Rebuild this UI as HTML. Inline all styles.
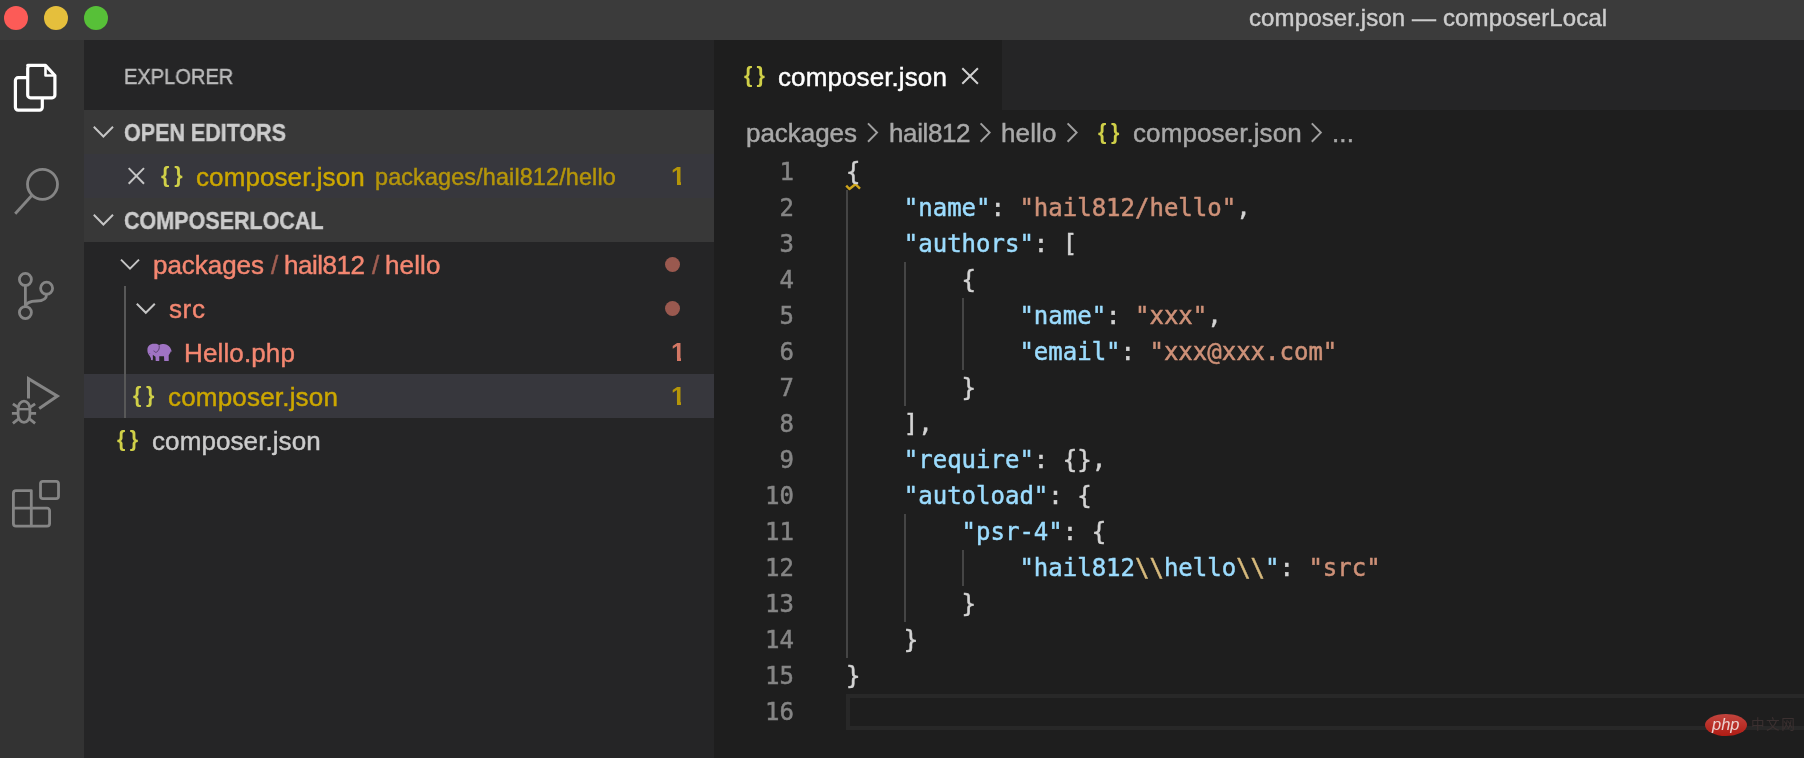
<!DOCTYPE html>
<html lang="en">
<head>
<meta charset="utf-8">
<title>composer.json — composerLocal</title>
<style>
*{box-sizing:border-box;margin:0;padding:0}
html,body{width:1804px;height:758px;overflow:hidden;background:#1e1e1e}
body{position:relative;font-family:"Liberation Sans",sans-serif;color:#cccccc;-webkit-font-smoothing:antialiased}
.abs{position:absolute}
.t{position:absolute;white-space:nowrap;line-height:44px;height:44px}

/* title bar */
#titlebar{left:0;top:0;width:1804px;height:40px;background:#3b3b3b}
.light{position:absolute;top:6px;width:24px;height:24px;border-radius:50%}
#title{left:1250px;top:-3px;font-size:24px;color:#cccccc;line-height:42px;height:42px}

/* activity bar */
#activity{left:0;top:40px;width:84px;height:718px;background:#333333}
#activity svg{position:absolute}

/* sidebar */
#sidebar{left:84px;top:40px;width:630px;height:718px;background:#252526}
.hdr{position:absolute;left:0;width:630px;height:44px;background:#383838}
.hdr .lbl{position:absolute;left:40px;top:1px;line-height:44px;font-size:24px;font-weight:bold;color:#cccccc;white-space:nowrap}
.row{position:absolute;left:0;width:630px;height:44px}
.row.sel{background:#37373d}
.row .lbl{position:absolute;top:0;line-height:44px;font-size:26px;white-space:nowrap}
.row .badge{position:absolute;left:587px;top:0;line-height:44px;font-size:25.5px;font-weight:bold;opacity:.85;clip-path:polygon(0 0,10px 0,10px 44px,6px 44px,6px 27.8px,0 27.8px)}
.row .dot{position:absolute;left:581px;top:15px;width:15px;height:15px;border-radius:50%;background:#9a594f}
.err{color:#f48771}
.warn{color:#cca700}
.json{color:#d0d048 !important;font-weight:bold;font-size:21.5px !important;-webkit-text-stroke:0 !important;margin-top:-1px !important}
.chev{position:absolute}

/* editor */
#tabs{left:714px;top:40px;width:1090px;height:70px;background:#252526}
#tab{left:0;top:0;width:288px;height:70px;background:#1e1e1e}
#crumbs{left:714px;top:110px;width:1090px;height:44px;background:#1e1e1e}
#crumbs .t{font-size:26px;color:#a9a9a9;top:1px}
#code{left:714px;top:154px;width:1090px;height:604px;background:#1e1e1e;font-family:"DejaVu Sans Mono","Liberation Mono",monospace;font-size:24px}
.ln{position:absolute;left:0;width:80px;text-align:right;height:36px;line-height:36px;color:#858585;white-space:pre}
.cl{position:absolute;left:132px;height:36px;line-height:36px;color:#d4d4d4;white-space:pre}
.k{color:#9cdcfe}.s{color:#ce9178}.e{color:#d7ba7d}
.guide{position:absolute;width:2px;background:#454545}
.t,.lbl,.ln,.cl,.badge{will-change:transform}
.t,.lbl{-webkit-text-stroke:0.45px}
.cl,.ln{-webkit-text-stroke:0.5px}
.row .lbl{margin-top:1px}
</style>
</head>
<body>

<!-- TITLE BAR -->
<div id="titlebar" class="abs">
  <div class="light" style="left:4px;background:#fc5b57"></div>
  <div class="light" style="left:44px;background:#e5bf3c"></div>
  <div class="light" style="left:84px;background:#57c038"></div>
  <div id="title" class="t" style="left:1249.1px;letter-spacing:0.12px">composer.json — composerLocal</div>
</div>

<!-- ACTIVITY BAR -->
<div id="activity" class="abs">
  <!-- files (active) : coordinates are page coords, svg offset by top:40 -->
  <svg width="84" height="718" viewBox="0 40 84 718" style="left:0;top:0" fill="none" stroke-linejoin="round" stroke-linecap="butt">
    <g stroke="#ffffff" stroke-width="3.2">
      <path d="M27.7 65.4 H45.5 L54.9 75.5 V95 a2.8 2.8 0 0 1 -2.8 2.8 H30.5 a2.8 2.8 0 0 1 -2.8 -2.8 V68.2 a2.8 2.8 0 0 1 2.8 -2.8 Z"/>
      <path d="M45.5 65.4 V75.5 H54.9" stroke-width="2.6"/>
      <path d="M27.7 77.7 H18.2 a2.8 2.8 0 0 0 -2.8 2.8 V107.3 a2.8 2.8 0 0 0 2.8 2.8 H39.5 a2.8 2.8 0 0 0 2.8 -2.8 V97.8"/>
    </g>
    <g stroke="#858585" stroke-width="2.8">
      <!-- search -->
      <circle cx="42.5" cy="184.3" r="15"/>
      <path d="M32 195.2 L15.2 213.8"/>
      <!-- scm -->
      <circle cx="25.4" cy="279.4" r="6"/>
      <circle cx="46.6" cy="288.2" r="6"/>
      <circle cx="25.4" cy="312.6" r="6"/>
      <path d="M25.4 285.4 V306.6"/>
      <path d="M46.6 294.2 C46.6 300.5 41 301 36.5 301 C30.5 301 26.2 303 25.4 306.6"/>
      <!-- debug -->
      <path d="M28.5 398.6 V378.6 L57.4 396.1 L39.2 408.6" stroke-linejoin="miter" stroke-width="3"/>
      <rect x="18.1" y="401.1" width="11.8" height="21.3" rx="5.9" ry="7.6"/>
      <path d="M18.4 409.2 H29.6" stroke-width="2.4"/>
      <path d="M18.4 407.6 L12.9 403.8 M29.6 407.6 L35.1 403.8 M18.1 413.4 H11.9 M29.9 413.4 H36.1 M18.5 418.8 L12.9 423.3 M29.5 418.8 L35.1 423.3"/>
      <!-- extensions -->
      <rect x="40.5" y="481.4" width="18" height="17.2" rx="2.4"/>
      <path d="M31.3 490.6 H16 a2.6 2.6 0 0 0 -2.6 2.6 V523.6 a2.6 2.6 0 0 0 2.6 2.6 H47 a2.6 2.6 0 0 0 2.6 -2.6 V510.8 a2.6 2.6 0 0 0 -2.6 -2.6 H31.3 Z"/>
      <path d="M31.3 508.2 V526.2 M13.4 508.2 H31.3"/>
    </g>
  </svg>
</div>

<!-- SIDEBAR (coordinates relative to sidebar origin 84,40) -->
<div id="sidebar" class="abs">
  <div id="t_explorer" class="t" style="left:39.9px;top:15px;font-size:21.8px;color:#bbbbbb;transform-origin:0 50%;transform:scaleX(0.9201)">EXPLORER</div>

  <div class="hdr" style="top:70px"><span id="t_open" class="lbl" style="left:40.2px;transform-origin:0 50%;transform:scaleX(0.8951)">OPEN EDITORS</span></div>
  <div class="row sel" style="top:114px">
    <span id="j1" class="lbl json" style="left:76.8px;letter-spacing:0.23px">{&#8201;}</span>
    <span id="t_oe_name" class="lbl warn" style="left:111.8px;letter-spacing:0.09px">composer.json</span>
    <span id="t_oe_desc" class="lbl warn" style="left:291.3px;font-size:23.4px;opacity:.85;letter-spacing:0.13px">packages/hail812/hello</span>
    <span id="b1" class="badge warn">1</span>
  </div>
  <div class="hdr" style="top:158px"><span id="t_local" class="lbl" style="left:40.2px;transform-origin:0 50%;transform:scaleX(0.8963)">COMPOSERLOCAL</span></div>

  <div class="row" style="top:202px">
    <span id="t_p1" class="lbl err" style="left:69.1px;letter-spacing:-0.05px">packages</span>
    <span id="t_s1" class="lbl err" style="left:187.3px;opacity:.6">/</span>
    <span id="t_p2" class="lbl err" style="left:199.6px;letter-spacing:-0.48px">hail812</span>
    <span id="t_s2" class="lbl err" style="left:287.5px;opacity:.6">/</span>
    <span id="t_p3" class="lbl err" style="left:301px;letter-spacing:0.11px">hello</span>
    <span class="dot"></span>
  </div>
  <div class="row" style="top:246px">
    <span id="t_src" class="lbl err" style="left:84.7px;letter-spacing:0.62px">src</span>
    <span class="dot"></span>
  </div>
  <div class="row" style="top:290px">
    <span id="t_php" class="lbl err" style="left:99.5px;letter-spacing:0.13px">Hello.php</span>
    <span id="b2" class="badge err">1</span>
  </div>
  <div class="row sel" style="top:334px">
    <span id="j2" class="lbl json" style="left:48.6px;letter-spacing:0.12px">{&#8201;}</span>
    <span id="t_cj1" class="lbl warn" style="left:83.6px;letter-spacing:0.19px">composer.json</span>
    <span id="b3" class="badge warn">1</span>
  </div>
  <div class="row" style="top:378px">
    <span id="j3" class="lbl json" style="left:33.4px;letter-spacing:0.08px">{&#8201;}</span>
    <span id="t_cj2" class="lbl" style="left:67.7px;color:#cccccc;letter-spacing:0.09px">composer.json</span>
  </div>
  <div class="abs" style="left:40px;top:246px;width:2px;height:132px;background:#585858"></div>

  <!-- sidebar icons: chevrons, close, php elephant (page coords via viewBox) -->
  <svg class="abs" style="left:0;top:0" width="630" height="718" viewBox="84 40 630 718" fill="none">
    <g stroke="#c5c5c5" stroke-width="2" stroke-linejoin="miter">
      <path d="M93.8 126.8 L103.4 136.5 L113 126.8"/>
      <path d="M93.8 214.8 L103.4 224.5 L113 214.8"/>
      <path d="M121 259.6 L130 268.6 L139 259.6"/>
      <path d="M136.8 303.8 L145.8 312.8 L154.8 303.8"/>
      <path d="M128.7 168.1 L144 183.7 M144 168.1 L128.7 183.7"/>
    </g>
    <g transform="translate(147.2 343.5) scale(0.04731)">
      <path fill="#a074c4" d="M5 140 C0 60 55 5 145 5 C195 0 235 15 255 35 C295 10 365 5 415 25 C475 50 505 110 520 175 L500 165 C490 200 465 230 455 250 L455 370 L360 370 L355 270 L255 270 L255 370 L180 370 L175 280 C155 270 135 255 120 240 C115 280 130 320 115 355 L80 350 C90 300 55 270 30 230 C10 200 3 170 5 140 Z"/>
      <path stroke="#3a2a48" stroke-width="14" d="M250 40 C265 90 250 150 200 180 C170 195 150 175 140 150"/>
      <circle cx="55" cy="210" r="9" fill="#3a2a48"/>
    </g>
  </svg>
</div>

<!-- TABS -->
<div id="tabs" class="abs">
  <div id="tab" class="abs">
    <span id="j4" class="t json" style="left:29.6px;top:14px;letter-spacing:-0.07px">{&#8201;}</span>
    <span id="t_tab" class="t" style="left:64.3px;top:15px;font-size:26px;color:#ffffff;letter-spacing:0.1px">composer.json</span>
    <svg class="abs" style="left:0;top:0" width="288" height="70" viewBox="714 40 288 70" fill="none"><path stroke="#d0d0d0" stroke-width="2" d="M962.3 68.2 L977.9 83.8 M977.9 68.2 L962.3 83.8"/></svg>
  </div>
</div>

<!-- BREADCRUMBS -->
<div id="crumbs" class="abs">
  <span id="c1" class="t" style="left:31.9px;letter-spacing:-0.05px">packages</span>
  <span id="c2" class="t" style="left:174.6px;letter-spacing:-0.39px">hail812</span>
  <span id="c3" class="t" style="left:287.2px;letter-spacing:0.12px">hello</span>
  <span id="j5" class="t json" style="left:383.8px;letter-spacing:0.22px">{&#8201;}</span>
  <span id="c4" class="t" style="left:418.6px;letter-spacing:0.09px">composer.json</span>
  <span id="c5" class="t" style="left:618px;letter-spacing:0.09px">...</span>
  <svg class="abs" style="left:0;top:0" width="1090" height="44" viewBox="714 110 1090 44" fill="none">
    <g stroke="#a0a0a0" stroke-width="2">
      <path d="M868 123.4 L877 132.6 L868 141.8"/>
      <path d="M980.6 123.4 L989.6 132.6 L980.6 141.8"/>
      <path d="M1067.6 123.4 L1076.6 132.6 L1067.6 141.8"/>
      <path d="M1311.8 123.4 L1320.8 132.6 L1311.8 141.8"/>
    </g>
  </svg>
</div>

<!-- CODE -->
<div id="code" class="abs">

  <div class="guide" style="left:132px;top:36px;height:468px"></div>
  <div class="guide" style="left:190px;top:108px;height:144px"></div>
  <div class="guide" style="left:248px;top:144px;height:72px"></div>
  <div class="guide" style="left:190px;top:360px;height:108px"></div>
  <div class="guide" style="left:248px;top:396px;height:36px"></div>
  <svg class="abs" style="left:128px;top:26px" width="24" height="12" viewBox="842 180 24 12" fill="none"><path d="M846.2 185.6 L849.4 189 L855.4 184.2 L860 188.6" stroke="#cfa51c" stroke-width="2.4" stroke-linejoin="round"/></svg>
  <div class="abs" style="left:132px;top:540px;width:960px;height:36px;border:4px solid #282828;border-right:none"></div>
  <div class="ln" style="top:0px">1</div><div class="cl" style="top:0px">{</div>
  <div class="ln" style="top:36px">2</div><div class="cl" style="top:36px">    <span class="k">"name"</span>: <span class="s">"hail812/hello"</span>,</div>
  <div class="ln" style="top:72px">3</div><div class="cl" style="top:72px">    <span class="k">"authors"</span>: [</div>
  <div class="ln" style="top:108px">4</div><div class="cl" style="top:108px">        {</div>
  <div class="ln" style="top:144px">5</div><div class="cl" style="top:144px">            <span class="k">"name"</span>: <span class="s">"xxx"</span>,</div>
  <div class="ln" style="top:180px">6</div><div class="cl" style="top:180px">            <span class="k">"email"</span>: <span class="s">"xxx@xxx.com"</span></div>
  <div class="ln" style="top:216px">7</div><div class="cl" style="top:216px">        }</div>
  <div class="ln" style="top:252px">8</div><div class="cl" style="top:252px">    ],</div>
  <div class="ln" style="top:288px">9</div><div class="cl" style="top:288px">    <span class="k">"require"</span>: {},</div>
  <div class="ln" style="top:324px">10</div><div class="cl" style="top:324px">    <span class="k">"autoload"</span>: {</div>
  <div class="ln" style="top:360px">11</div><div class="cl" style="top:360px">        <span class="k">"psr-4"</span>: {</div>
  <div class="ln" style="top:396px">12</div><div class="cl" style="top:396px">            <span class="k">"hail812<span class="e">\\</span>hello<span class="e">\\</span>"</span>: <span class="s">"src"</span></div>
  <div class="ln" style="top:432px">13</div><div class="cl" style="top:432px">        }</div>
  <div class="ln" style="top:468px">14</div><div class="cl" style="top:468px">    }</div>
  <div class="ln" style="top:504px">15</div><div class="cl" style="top:504px">}</div>
  <div class="ln" style="top:540px">16</div><div class="cl" style="top:540px"></div>

</div>

<!-- watermark -->
<div class="abs" style="left:1704.5px;top:714.2px;width:42px;height:22px;border-radius:50%;background:linear-gradient(#c2453e,#b01c14)"></div>
<div id="wm1" class="t" style="left:1711.5px;top:702px;font-size:16.5px;font-style:italic;color:#ecd2d0;-webkit-text-stroke:0">php</div>
<div id="wm2" class="t" style="left:1750.5px;top:703px;font-size:13.6px;letter-spacing:1.5px;color:#3b3030;-webkit-text-stroke:0;font-family:'Liberation Sans','Noto Sans CJK SC',sans-serif">中文网</div>

</body>
</html>
